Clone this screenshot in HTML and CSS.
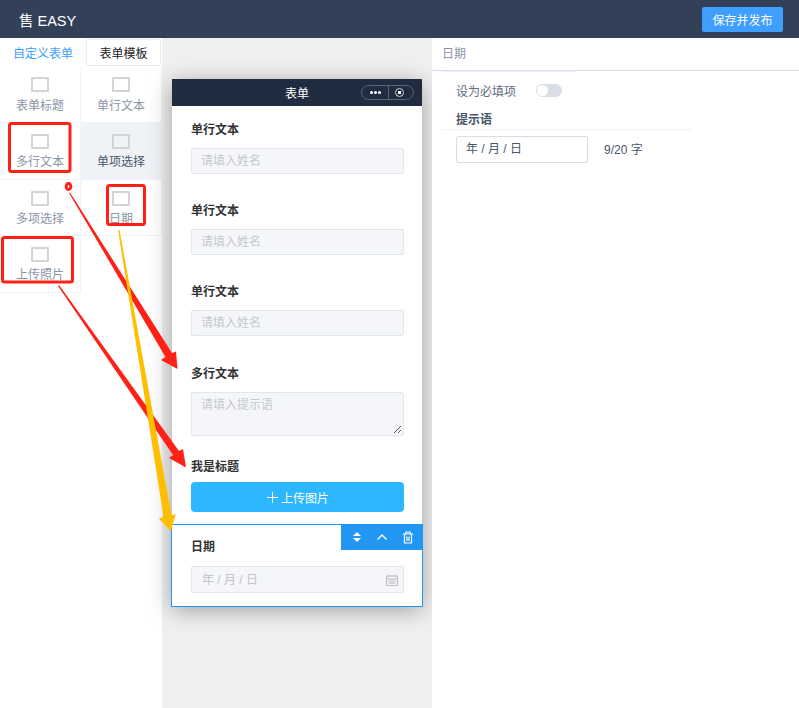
FILE: index.html

```html
<!DOCTYPE html>
<html lang="en">
<head>
    <meta charset="UTF-8">
    <meta name="viewport" content="width=device-width, initial-scale=1.0">
    <title>售 EASY</title>
    <link rel="stylesheet" href="styles.css">
</head>
<body>
    <div class="header">
        <div class="logo">售 EASY</div>
        <button class="save-button">保存并发布</button>
    </div>

    <div class="main">
        <!-- Left widget list -->
        <div class="sidebar">
            <div class="tabs">
                <div class="tab tab-active">自定义表单</div>
                <div class="tab tab-other">表单模板</div>
            </div>
            <div class="widgets">
                <div class="widget"><span class="widget-icon"></span>表单标题</div>
                <div class="widget"><span class="widget-icon"></span>单行文本</div>
                <div class="widget"><span class="widget-icon"></span>多行文本</div>
                <div class="widget widget-hover"><span class="widget-icon"></span>单项选择</div>
                <div class="widget"><span class="widget-icon"></span>多项选择</div>
                <div class="widget"><span class="widget-icon"></span>日期</div>
                <div class="widget"><span class="widget-icon"></span>上传照片</div>
            </div>
        </div>

        <!-- Phone preview -->
        <div class="canvas">
            <div class="phone">
                <div class="phone-bar">
                    <span>表单</span>
                    <div class="capsule">
                        <span class="capsule-dots"><i></i><i></i><i></i></span>
                        <span class="capsule-target"></span>
                    </div>
                </div>
                <div class="field">
                    <div class="field-label">单行文本</div>
                    <div class="fake-input">请填入姓名</div>
                </div>
                <div class="field">
                    <div class="field-label">单行文本</div>
                    <div class="fake-input">请填入姓名</div>
                </div>
                <div class="field">
                    <div class="field-label">单行文本</div>
                    <div class="fake-input">请填入姓名</div>
                </div>
                <div class="field field-multi">
                    <div class="field-label">多行文本</div>
                    <div class="fake-input fake-textarea">
                        请填入提示语
                        <svg class="resize-grip" width="9" height="9" viewBox="0 0 9 9"><path d="M1 8 8 1M5 8 8 5" stroke="#555" fill="none"/></svg>
                    </div>
                </div>
                <div class="field field-upload">
                    <div class="field-label">我是标题</div>
                    <div class="upload-button">
                        <svg width="11" height="11" viewBox="0 0 11 11"><path d="M5.5 0v11M0 5.5h11" stroke="#fff" fill="none"/></svg>
                        上传图片
                    </div>
                </div>
                <div class="field field-selected">
                    <div class="field-tools">
                        <svg width="10" height="12" viewBox="0 0 10 12"><path d="M5 1 9 5H1zM5 11 1 7h8z" fill="#fff"/></svg>
                        <svg width="12" height="12" viewBox="0 0 12 12"><path d="M1.500 8.500 6 4l4.500 4.500" stroke="#fff" stroke-width="1.400" fill="none"/></svg>
                        <svg width="12" height="13" viewBox="0 0 12 13"><path d="M1 3h10M4 3V1h4v2M2.500 3v9h7V3M5 5.500v4.500M7 5.500v4.500" stroke="#fff" stroke-width="1.200" fill="none"/></svg>
                    </div>
                    <div class="field-label">日期</div>
                    <div class="fake-input date-input">
                        年 / 月 / 日
                        <svg width="12" height="12" viewBox="0 0 12 12"><path d="M.5 2h11v9.500H.5zM.5 5h11M3 .5V3M9 .5V3M2.500 7h7M2.500 9h7" stroke="#bbb" fill="none"/></svg>
                    </div>
                </div>
            </div>
        </div>

        <!-- Right settings -->
        <div class="settings">
            <div class="settings-title">日期</div>
            <div class="required-row">
                <span>设为必填项</span>
                <span class="switch"></span>
            </div>
            <div class="hint-label">提示语</div>
            <div class="hint-row">
                <div class="hint-input">年 / 月 / 日</div>
                <span class="hint-count">9/20 字</span>
            </div>
        </div>
    </div>

    <!-- Red and yellow marks drawn over the screenshot -->
    <svg class="marks" width="799" height="708" viewBox="0 0 799 708">
        <g fill="none" stroke="#ff2116" stroke-width="3" stroke-linejoin="round">
            <rect x="9.500" y="123.500" width="60.500" height="48" rx="2"/>
            <rect x="107.500" y="185.500" width="37" height="39" rx="2"/>
            <rect x="2.500" y="237.500" width="70" height="44.500" rx="2"/>
            <ellipse cx="68.500" cy="186.500" rx="2.300" ry="3"/>
        </g>
        <path d="M69 193 70 192.500 172 353 176 351.500 177.500 369 161 360 165.500 357Z" fill="#ff2116"/>
        <path d="M58 286 59 285 179 451 183 449 186 467.500 169 458 173 455Z" fill="#ff2116"/>
        <path d="M118 230 119.500 230 171.500 515.500 175.700 514 171 531 159 519 163.500 516.500Z" fill="#ffbf00"/>
    </svg>
</body>
</html>
```

FILE: styles.css

```css
* { box-sizing: border-box; }
body { font-family: "Liberation Sans", "Noto Sans CJK SC", sans-serif; font-size: 12px; margin: 0; padding: 0; position: relative; height: 708px; overflow: hidden; color: #303133; }

.header { background-color: #324058; color: #fff; height: 38px; display: flex; align-items: center; justify-content: space-between; padding: 0 16px 0 19px; }
.logo { font-size: 14.500px; }
.save-button { background-color: #409eff; color: #fff; font-family: inherit; font-size: 12px; border: none; border-radius: 2px; width: 81px; height: 25px; padding: 0; }

.main { display: flex; height: 670px; }

.sidebar { width: 162px; background-color: #fff; }
.tabs { display: flex; height: 29px; padding-top: 1px; padding-bottom: 1px; }
.tab { display: flex; align-items: center; justify-content: center; }
.tab-active { width: 86px; color: #409eff; }
.tab-other { width: 75px; color: #222; border: 1px solid #e9edf3; border-radius: 1px; }
.widgets { display: grid; grid-template-columns: 81px 81px; grid-template-rows: 56px 57px 56px 57px; }
.widget { display: flex; flex-direction: column; align-items: center; padding-top: 10px; color: #8a94a6; border-right: 1px solid #f0f3f7; border-bottom: 1px solid #f0f3f7; }
.widget:nth-child(n+3) { padding-top: 11px; }
.widget-hover { background-color: #eff2f7; color: #48576a; }
.widget-icon { display: block; width: 18px; height: 15px; border: 2px solid #d4d4d4; border-radius: 1px; margin-bottom: 4px; }
.widget:nth-child(n+3) .widget-icon { margin-bottom: 3px; }

.canvas { width: 270px; background-color: #f0f0f0; padding: 41px 10px 0; }
.phone { width: 250px; height: 527px; background-color: #fff; box-shadow: 0 4px 22px rgba(0, 0, 0, 0.35); }
.phone-bar { height: 27px; background-color: #202c3f; color: #fff; display: flex; align-items: center; justify-content: center; position: relative; }
.capsule { position: absolute; right: 8px; top: 6px; width: 53px; height: 15px; border: 1px solid #5a6576; border-radius: 8px; display: flex; }
.capsule-dots { width: 27px; display: flex; align-items: center; justify-content: center; gap: 1px; border-right: 1px solid #5a6576; }
.capsule-dots i { display: block; width: 3px; height: 3px; border-radius: 50%; background-color: #fff; }
.capsule-target { width: 9px; height: 9px; border: 1px solid #cfd3d9; border-radius: 50%; margin: 2px 0 0 6px; background: radial-gradient(circle, #fff 0 1.500px, transparent 2px); }

.field { padding: 16px 18px 0 19px; height: 81px; }
.field-label { font-weight: bold; color: #333; line-height: 17px; margin-bottom: 9px; }
.fake-input { height: 26px; line-height: 24px; background-color: #f5f6fa; border: 1px solid #e2e6ed; border-radius: 2px; padding: 0 9px; color: #c5c8ce; position: relative; }
.fake-textarea { height: 44px; line-height: 24px; }
.resize-grip { position: absolute; right: 1px; bottom: 1px; }
.field-multi { height: 110px; padding-top: 17px; }
.field-upload { height: 65px; padding-top: 0; }
.field-upload .field-label { margin-bottom: 6px; }
.upload-button { height: 30px; background-color: #2db7ff; color: #fff; border-radius: 4px; display: flex; align-items: center; justify-content: center; gap: 3px; padding-left: 1px; }
.field-selected { position: relative; height: 83px; margin: 0 -1px; padding: 14px 18px 0 19px; border: 1px solid #1f96f5; }
.field-selected .field-label { margin-bottom: 10px; }
.field-tools { position: absolute; right: -1px; top: -1px; width: 82px; height: 26px; background-color: #2196f3; display: flex; align-items: center; justify-content: space-around; padding: 0 2px 0 4px; }
.date-input { display: flex; align-items: center; justify-content: space-between; padding: 0 5px 0 10px; height: 27px; color: #c0c3c9; }

.settings { flex: 1; background-color: #fff; color: #5e6d82; }
.settings-title { height: 33px; line-height: 32px; padding-left: 10px; color: #8a94a6; border-bottom: 1px solid #d8dfea; position: relative; }
.settings-title::after { content: ""; position: absolute; left: 10px; bottom: -2px; width: 134px; height: 1px; background-color: #eef0f7; }
.required-row { display: flex; align-items: center; gap: 20px; padding-left: 24px; height: 38px; }
.switch { display: block; width: 26px; height: 13px; background-color: #d9dde5; border-radius: 7px; position: relative; }
.switch::before { content: ""; position: absolute; left: 1px; top: 1px; width: 11px; height: 11px; background-color: #fff; border-radius: 50%; }
.hint-label { margin: 3px 0 0 10px; width: 249px; padding-left: 14px; font-weight: bold; line-height: 17px; height: 18px; color: #48576a; border-bottom: 1px solid #eef0f4; }
.hint-row { display: flex; align-items: center; gap: 16px; margin: 6px 0 0 24px; color: #48576a; }
.hint-input { width: 132px; height: 27px; line-height: 25px; border: 1px solid #d8dce5; border-radius: 2px; padding-left: 9px; }
.hint-count { margin-bottom: 3px; }

.marks { position: absolute; left: 0; top: 0; pointer-events: none; }
```
